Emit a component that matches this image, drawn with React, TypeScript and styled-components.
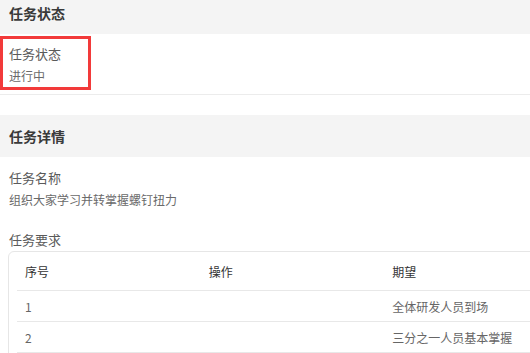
import React from "react";
import styled, { createGlobalStyle } from "styled-components";

const GlobalStyle = createGlobalStyle`
  html, body {
    margin: 0;
    padding: 0;
    background: #ffffff;
    overflow: hidden;
  }
  body {
    font-family: "Noto Sans CJK SC", "Noto Sans", "Liberation Sans", sans-serif;
  }
`;

const Page = styled.div`
  width: 530px;
  margin-top: -8px;
  overflow: hidden;
`;

const Section = styled.section<{ $bordered?: boolean }>`
  display: flex;
  flex-direction: column;
  border-bottom: ${({ $bordered }) => ($bordered ? "1px solid #ececec" : "none")};
  margin-bottom: ${({ $bordered }) => ($bordered ? "20px" : "0")};
`;

const SectionHeader = styled.h2`
  margin: 0;
  height: 42px;
  display: flex;
  align-items: center;
  padding-left: 9px;
  background: #f4f4f4;
  font-size: 14px;
  font-weight: 700;
  color: #3a3a3a;
`;

const SectionBody = styled.div<{ $pad: number }>`
  display: flex;
  flex-direction: column;
  gap: 20px;
  padding: ${({ $pad }) => `${$pad}px 0 4px`};
`;

const Field = styled.div<{ $highlighted?: boolean }>`
  display: flex;
  flex-direction: column;
  gap: 2px;
  box-sizing: border-box;
  width: ${({ $highlighted }) => ($highlighted ? "91px" : "auto")};
  padding: ${({ $highlighted }) => ($highlighted ? "5px 6px 0" : "0 9px")};
  height: ${({ $highlighted }) => ($highlighted ? "54px" : "auto")};
  border: ${({ $highlighted }) => ($highlighted ? "3px solid #f23a3a" : "none")};
`;

const Label = styled.div`
  font-size: 13px;
  line-height: 20px;
  color: #5a5a5a;
`;

const Value = styled.div`
  font-size: 12px;
  line-height: 20px;
  color: #6a6a6a;
`;

const TableWrap = styled.div`
  margin: 1px 0 0 8px;
  width: 570px;
  box-sizing: border-box;
  border: 1px solid #e6e6e6;
  border-radius: 6px;
  padding: 0 8px 8px;
`;

const Table = styled.table`
  width: 551px;
  border-collapse: collapse;
  table-layout: fixed;
  font-size: 12px;
`;

const HeadCell = styled.th`
  height: 38px;
  padding: 0 8px;
  text-align: left;
  font-weight: 400;
  color: #333333;
  border-bottom: 1px solid #e8e8e8;
`;

const Cell = styled.td`
  height: 30px;
  padding: 0 8px;
  color: #666666;
  white-space: nowrap;
  border-bottom: 1px solid #e8e8e8;
`;

const requirements = [
  { id: 1, action: "", expect: "全体研发人员到场" },
  { id: 2, action: "", expect: "三分之一人员基本掌握" },
];

const App: React.FC = () => {
  return (
    <Page>
      <GlobalStyle />
      <Section $bordered>
        <SectionHeader>任务状态</SectionHeader>
        <SectionBody $pad={2}>
          <Field $highlighted>
            <Label>任务状态</Label>
            <Value>进行中</Value>
          </Field>
        </SectionBody>
      </Section>

      <Section>
        <SectionHeader>任务详情</SectionHeader>
        <SectionBody $pad={11}>
          <Field>
            <Label>任务名称</Label>
            <Value>组织大家学习并转掌握螺钉扭力</Value>
          </Field>
          <div>
            <Field>
              <Label>任务要求</Label>
            </Field>
            <TableWrap>
              <Table>
                <thead>
                  <tr>
                    <HeadCell>序号</HeadCell>
                    <HeadCell>操作</HeadCell>
                    <HeadCell>期望</HeadCell>
                  </tr>
                </thead>
                <tbody>
                  {requirements.map((row) => (
                    <tr key={row.id}>
                      <Cell>{row.id}</Cell>
                      <Cell>{row.action}</Cell>
                      <Cell>{row.expect}</Cell>
                    </tr>
                  ))}
                </tbody>
              </Table>
            </TableWrap>
          </div>
        </SectionBody>
      </Section>
    </Page>
  );
};

export default App;
